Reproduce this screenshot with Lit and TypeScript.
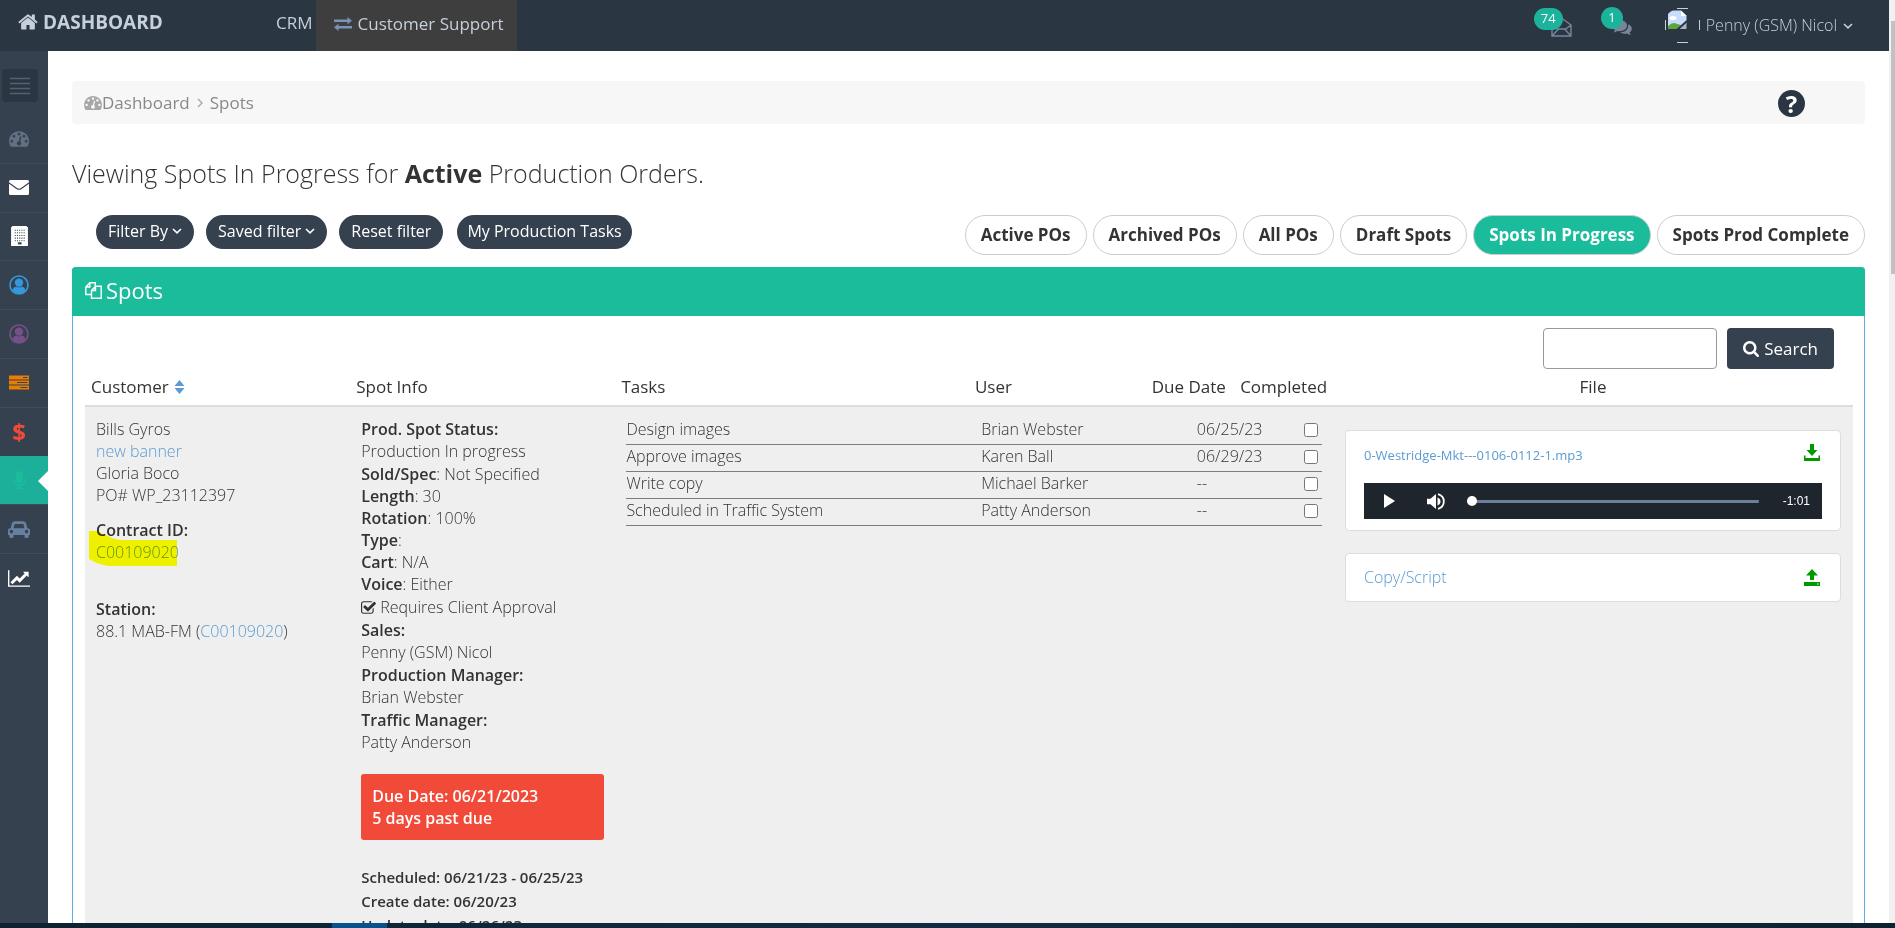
import { LitElement, html, css, svg, nothing, TemplateResult } from "lit";
import { customElement } from "lit/decorators.js";
import { classMap } from "lit/directives/class-map.js";

interface Glyph {
  box: string;
  w: number;
  h: number;
  body: TemplateResult;
}

const TACHOMETER =
  "M384 1152q0-53-37.5-90.5t-90.5-37.5-90.5 37.5-37.5 90.5 37.5 90.5 90.5 37.5 90.5-37.5 37.5-90.5zm192-448q0-53-37.5-90.5t-90.5-37.5-90.5 37.5-37.5 90.5 37.5 90.5 90.5 37.5 90.5-37.5 37.5-90.5zm428 481l101-382q6-26-7.5-48.5t-38.5-29.5-48 6.5-30 39.5l-101 382q-60 5-107 43.5t-63 98.5q-20 77 20 146t117 89 146-20 89-117q16-60-6-117t-72-91zm660-33q0-53-37.5-90.5t-90.5-37.5-90.5 37.5-37.5 90.5 37.5 90.5 90.5 37.5 90.5-37.5 37.5-90.5zm-640-640q0-53-37.5-90.5t-90.5-37.5-90.5 37.5-37.5 90.5 37.5 90.5 90.5 37.5 90.5-37.5 37.5-90.5zm448 192q0-53-37.5-90.5t-90.5-37.5-90.5 37.5-37.5 90.5 37.5 90.5 90.5 37.5 90.5-37.5 37.5-90.5zm320 448q0 261-141 483-19 29-54 29h-1402q-35 0-54-29-141-221-141-483 0-182 71-348t191-286 286-191 348-71 348 71 286 191 191 286 71 348z";

const person = svg`
  <circle cx="10" cy="10" r="9" fill="none" stroke="currentColor" stroke-width="1.6"/>
  <circle cx="10" cy="7.6" r="4.2" fill="currentColor"/>
  <path d="M3.6 15.2q.8-3.4 3.6-3.8 2.8 1.8 5.6 0 2.800.4 3.600 3.800-2.600 3.200-6.400 3.200t-6.400-3.200z" fill="currentColor"/>`;

const ICONS: Record<string, Glyph> = {
  home: {
    box: "64 224 1664 1344", w: 20, h: 16,
    body: svg`<path d="M1472 992v480q0 26-19 45t-45 19h-384v-384h-256v384h-384q-26 0-45-19t-19-45v-480q0-1 .5-3t.5-3l575-474 575 474q1 2 1 6zm223-69l-62 74q-8 9-21 11h-3q-13 0-21-7l-692-577-692 577q-12 8-24 7-13-2-21-11l-62-74q-8-10-7-23.500t11-21.500l719-599q32-26 76-26t76 26l244 204v-195q0-14 9-23t23-9h192q14 0 23 9t9 23v408l219 182q10 8 11 21.500t-7 23.500z"/>`,
  },
  exchange: {
    box: "0 0 18 14", w: 18, h: 14,
    body: svg`<path d="M0 2.500h13.500V0L18 3.800 13.500 7.300V5H0zM18 11.500H4.500V14L0 10.300 4.500 6.800V9H18z"/>`,
  },
  openMail: {
    box: "0 0 21 20", w: 21, h: 20,
    body: svg`<path d="M1 19V8l9.500-7L20 8v11zM1 19l6.500-7h6L20 19M1 8l6.500 5M20 8l-6.500 5" fill="none" stroke="currentColor" stroke-width="1.400"/>`,
  },
  chat: {
    box: "0 0 20 16", w: 20, h: 16,
    body: svg`<path d="M7.500 0C11.800 0 15 2.400 15 5.600s-3.200 5.600-7.500 5.600c-.8 0-1.500-.1-2.200-.3-1 .9-2.300 1.400-3.800 1.500.7-.7 1.200-1.400 1.400-2.500C1.100 8.900 0 7.400 0 5.600 0 2.400 3.200 0 7.500 0z"/><path d="M16.200 4.200c2.200.9 3.600 2.500 3.600 4.500 0 1.500-.8 2.800-2.200 3.800.2 1 .7 1.800 1.400 2.500-1.600-.1-2.900-.6-3.900-1.500-2.600.5-5.300 0-7-1.300 5 .2 8.700-3.200 8.100-8z"/>`,
  },
  chevron: {
    box: "0 0 10 6", w: 10, h: 6,
    body: svg`<path d="M1 1l4 3.800L9 1" fill="none" stroke="currentColor" stroke-width="1.600"/>`,
  },
  menu: {
    box: "0 0 20 18", w: 20, h: 18,
    body: svg`<path d="M0 1.500h20M0 6.500h20M0 11.500h20M0 16.500h20" fill="none" stroke="currentColor" stroke-width="1.600"/>`,
  },
  tachometer: { box: "0 256 1792 1408", w: 20, h: 16, body: svg`<path d=${TACHOMETER}/>` },
  tachometerSmall: { box: "0 256 1792 1408", w: 18, h: 14, body: svg`<path d=${TACHOMETER}/>` },
  mail: {
    box: "0 0 20 15", w: 20, h: 15,
    body: svg`<path d="M1.500 0h17Q20 0 20 1.500v.8L12 8q-2 1.400-4 0L0 2.300v-.8Q0 0 1.500 0z"/><path d="M0 3.700l7.400 5.200q2.600 1.700 5.200 0L20 3.700v9.800q0 1.500-1.500 1.500h-17Q0 15 0 13.500z"/>`,
  },
  building: {
    box: "0 0 16 19", w: 17, h: 20,
    body: svg`<path d="M1 0h14v1h1v18H0V1h1z"/><path d="M3.500 4h9.500M3.500 6.500h9.500M3.500 9h9.500M3.500 11.500h9.500M3.500 14h9.500" fill="none" stroke="#364150" stroke-width="1" stroke-dasharray="1 1.100"/><path d="M6.500 15.500h3.500v2H6.500z" fill="#364150"/>`,
  },
  person: { box: "0 0 20 20", w: 20, h: 20, body: person },
  tasks: {
    box: "0 0 20 14", w: 20, h: 15,
    body: svg`<path d="M0 0h20v4H0zM0 5h20v4H0zM0 10h20v4H0z"/><path d="M14 2h4.500M8 7h10.500M11.500 12h7" stroke="#364150" stroke-width="1"/>`,
  },
  mic: {
    box: "320 0 1152 1664", w: 13, h: 18,
    body: svg`<path d="M1472 704v128q0 221-147.500 384.500t-364.500 187.500v132h256q26 0 45 19t19 45-19 45-45 19h-640q-26 0-45-19t-19-45 19-45 45-19h256v-132q-217-24-364.500-187.500t-147.500-384.500v-128q0-26 19-45t45-19 45 19 19 45v128q0 185 131.500 316.500t316.500 131.500 316.500-131.500 131.500-316.500v-128q0-26 19-45t45-19 45 19 19 45zm-256-384v512q0 132-94 226t-226 94-226-94-94-226v-512q0-132 94-226t226-94 226 94 94 226z"/>`,
  },
  car: {
    box: "0 128 2048 1536", w: 22, h: 17,
    body: svg`<path d="M480 1088q0-66-47-113t-113-47-113 47-47 113 47 113 113 47 113-47 47-113zm36-320h1016l-89-357q-2-8-14-17.500t-21-9.500h-768q-9 0-21 9.500t-14 17.500zm1372 320q0-66-47-113t-113-47-113 47-47 113 47 113 113 47 113-47 47-113zm160-96v384q0 14-9 23t-23 9h-96v128q0 80-56 136t-136 56-136-56-56-136v-128h-1024v128q0 80-56 136t-136 56-136-56-56-136v-128h-96q-14 0-23-9t-9-23v-384q0-93 65.500-158.500t158.500-65.500h28l105-419q23-94 104-157.500t179-63.500h768q98 0 179 63.500t104 157.500l105 419h28q93 0 158.500 65.500t65.500 158.500z"/>`,
  },
  chart: {
    box: "0 128 2048 1536", w: 22, h: 17,
    body: svg`<path d="M2048 1536v128h-2048v-1536h128v1408h1920zm-128-1248v435q0 21-19.500 29.500t-35.500-7.500l-121-121-633 633q-10 10-23 10t-23-10l-233-233-416 416-192-192 585-585q10-10 23-10t23 10l233 233 464-464-121-121q-16-16-7.500-35.500t29.500-19.500h435q14 0 23 9t9 23z"/>`,
  },
  copy: {
    box: "0 0 17 17", w: 17, h: 17,
    body: svg`<path d="M6.500 12.500H.8V5L4.800.8h5.400V4M4.800.8V5H.8M6.500 16.200V8.500l4-4.300h5.700v12zM10.500 4.200v4.300h-4" fill="none" stroke="currentColor" stroke-width="1.400"/>`,
  },
  search: {
    box: "64 128 1664 1664", w: 16, h: 16,
    body: svg`<path d="M1216 832q0-185-131.500-316.500t-316.500-131.500-316.500 131.500-131.500 316.500 131.500 316.500 316.500 131.500 316.500-131.500 131.500-316.500zm512 832q0 52-38 90t-90 38q-54 0-90-38l-343-342q-179 124-399 124-143 0-273.500-55.500t-225-150-150-225-55.500-273.500 55.500-273.500 150-225 225-150 273.500-55.500 273.500 55.500 225 150 150 225 55.500 273.500q0 220-124 399l343 343q37 37 37 90z"/>`,
  },
  sort: {
    box: "0 0 10 14", w: 11, h: 14,
    body: svg`<path d="M5 0l5 6H0zM5 14L0 8h10z"/>`,
  },
  checked: {
    box: "64 128 1664 1408", w: 15, h: 13,
    body: svg`<path d="M1472 930v318q0 119-84.500 203.500t-203.500 84.500h-832q-119 0-203.500-84.500t-84.500-203.500v-832q0-119 84.500-203.500t203.500-84.500h832q63 0 117 25 15 7 18 23 3 17-9 29l-49 49q-10 10-23 10-3 0-9-2-23-6-45-6h-832q-66 0-113 47t-47 113v832q0 66 47 113t113 47h832q66 0 113-47t47-113v-254q0-13 9-22l64-64q10-10 23-10 6 0 12 3 20 8 20 29zm231-489l-814 814q-24 24-57 24t-57-24l-430-430q-24-24-24-57t24-57l110-110q24-24 57-24t57 24l263 263 647-647q24-24 57-24t57 24l110 110q24 24 24 57t-24 57z"/>`,
  },
  download: {
    box: "0 0 16 17", w: 16, h: 17,
    body: svg`<path d="M6 0h4v6h3.500L8 12 2.500 6H6zM0 11.500h1.500V14h13v-2.500H16V17H0z"/>`,
  },
  upload: {
    box: "0 0 16 17", w: 16, h: 17,
    body: svg`<path d="M8 0l6 6.500h-4V11H6V6.500H2zM0 13h16v4H0z"/><path d="M13 15h1.500" stroke="#fff" stroke-width="1"/>`,
  },
  play: { box: "0 0 11 14", w: 11, h: 14, body: svg`<path d="M0 0l11 7-11 7z"/>` },
  volume: {
    box: "0 0 18 17", w: 18, h: 17,
    body: svg`<path d="M0 5.700h3.500L9 1v15l-5.500-4.700H0zM10.500 4.500q3 1.200 3 4t-3 4z"/><path d="M11 1.200q5.800 1.600 5.800 7.300T11 15.800" fill="none" stroke="currentColor" stroke-width="1.800"/>`,
  },
};

const icon = (name: string) => {
  const g = ICONS[name];
  return html`<svg class="icon" viewBox=${g.box} width=${g.w} height=${g.h} aria-hidden="true">${g.body}</svg>`;
};

const NAV: { glyph: string; tone: string; label: string }[] = [
  { glyph: "tachometer", tone: "dim", label: "Dashboard" },
  { glyph: "mail", tone: "white", label: "Messages" },
  { glyph: "building", tone: "white", label: "Companies" },
  { glyph: "person", tone: "blue", label: "Contacts" },
  { glyph: "person", tone: "purple", label: "Leads" },
  { glyph: "tasks", tone: "orange", label: "Tasks" },
  { glyph: "", tone: "red", label: "Billing" },
  { glyph: "mic", tone: "active", label: "Production" },
  { glyph: "car", tone: "steel", label: "Traffic" },
  { glyph: "chart", tone: "white", label: "Reports" },
];

const TABS = ["Active POs", "Archived POs", "All POs", "Draft Spots", "Spots In Progress", "Spots Prod Complete"];

const TASKS = [
  ["Design images", "Brian Webster", "06/25/23"],
  ["Approve images", "Karen Ball", "06/29/23"],
  ["Write copy", "Michael Barker", "--"],
  ["Scheduled in Traffic System", "Patty Anderson", "--"],
];

const SPECS = [
  ["Sold/Spec", " Not Specified"],
  ["Length", " 30"],
  ["Rotation", " 100%"],
  ["Type", ""],
  ["Cart", " N/A"],
  ["Voice", " Either"],
];

const PEOPLE = [
  ["Sales:", "Penny (GSM) Nicol"],
  ["Production Manager:", "Brian Webster"],
  ["Traffic Manager:", "Patty Anderson"],
];

const shared = css`
  * { box-sizing: border-box; }
  a { color: #5b9bd1; text-decoration: none; }
  button, input { font: inherit; margin: 0; }
  button { cursor: pointer; }
  .icon { display: block; flex: none; fill: currentColor; }
`;

@customElement("top-bar")
export class TopBar extends LitElement {
  static styles = [shared, css`
    :host { display: flex; height: 51px; background: #2b3643; color: #c6cfda; font-size: 17px; line-height: 24px; }
    a { color: inherit; }
    .brand { display: flex; align-items: center; gap: 5px; width: 276px; padding: 0 0 8px 18px; font-size: 19px; font-weight: 700; }
    .crm { display: flex; align-items: center; padding: 0 3px 6px 0; }
    .support { display: flex; align-items: center; gap: 6px; padding: 0 14px 4px 18px; background: #3e3e3e; }
    .support .icon { color: #7a93b8; }
    .right { display: flex; align-items: center; margin-left: auto; padding-right: 36px; }
    .note { position: relative; display: block; color: #79869a; }
    .mail { margin: 3px 40px 0 0; }
    .talk { margin: 5px 33px 0 0; }
    .badge { position: absolute; right: 9px; bottom: 7px; height: 22px; padding: 0 7px; border-radius: 11px; background: #1bb39c; color: #fff; font-size: 13px; line-height: 21px; }
    .user { display: flex; align-items: center; gap: 6px; padding: 0; border: 0; background: none; color: #c6cfda; font-size: 16px; font-weight: 300; }
    .avatar { display: block; }
    .name { padding-bottom: 1px; }
  `];

  render() {
    return html`
      <a class="brand" href="#">${icon("home")}<span>DASHBOARD</span></a>
      <a class="crm" href="#">CRM</a>
      <a class="support" href="#">${icon("exchange")}<span>Customer Support</span></a>
      <div class="right">
        <a class="note mail" href="#" aria-label="Messages">${icon("openMail")}<span class="badge">74</span></a>
        <a class="note talk" href="#" aria-label="Chats">${icon("chat")}<span class="badge">1</span></a>
        <button class="user">
          <svg class="avatar" width="35" height="35" viewBox="0 0 35 35" aria-hidden="true">
            <path d="M.5 12v10M34.500 12v10M12 .5h11M12 34.500h11" stroke="#c6cfda" fill="none"/>
            <path d="M3 20V6q2-3 5-3.500h8l5.500 5V15l-7.500 6H3z" fill="#c9dcfb"/>
            <path d="M3 21v-3q5-5 9-2l4 1-3 4z" fill="#5aa83c"/>
            <path d="M14 21l7.500-7v7z" fill="#a9b4c4"/>
            <path d="M16 2.500v5.500h5.500z" fill="#fff"/>
            <path d="M12 22L22 13" stroke="#2b3643" stroke-width="2"/>
            <ellipse cx="8" cy="10" rx="3.500" ry="2" fill="#fff"/>
          </svg>
          <span class="name">Penny (GSM) Nicol</span>${icon("chevron")}
        </button>
      </div>`;
  }
}

@customElement("side-bar")
export class SideBar extends LitElement {
  static styles = [shared, css`
    :host { display: block; flex: none; width: 48px; padding-top: 18px; background: #364150; }
    .toggle { display: flex; align-items: center; justify-content: center; width: 36px; height: 33px; margin: 0 0 12px 2px; padding: 0; border: 0; border-radius: 4px; background: #2b3643; color: #56616f; }
    ul { display: flex; flex-direction: column; height: 488px; margin: 0; padding: 0; list-style: none; }
    li { flex: 1; border-top: 1px solid #414d5d; }
    li:first-child { border-color: transparent; }
    a { display: flex; align-items: center; justify-content: center; height: 100%; padding-right: 10px; font-size: 24px; font-weight: 700; line-height: 24px; }
    .dim { color: #637083; }
    .white { color: #fff; }
    .blue { color: #3598dc; }
    .purple { color: #75508a; }
    .orange { color: #e87e04; }
    .red { color: #f24a38; }
    .steel { color: #67809f; }
    li.on { border-color: #1caf9a; background: #1caf9a; }
    .active { position: relative; color: #1bbc9b; }
    .active::after { content: ""; position: absolute; right: 0; top: 14px; border: 10px solid transparent; border-left: 0; border-right-color: #fff; }
  `];

  render() {
    return html`
      <button class="toggle" aria-label="Toggle menu">${icon("menu")}</button>
      <ul>
        ${NAV.map((n) => html`<li class=${classMap({ on: n.tone === "active" })}>
          <a class=${n.tone} href="#" aria-label=${n.label}>${n.glyph ? icon(n.glyph) : "$"}</a>
        </li>`)}
      </ul>`;
  }
}

@customElement("audio-player")
export class AudioPlayer extends LitElement {
  static styles = [shared, css`
    :host { display: flex; align-items: center; height: 36px; padding: 0 12px 0 20px; background: #1e252d; color: #fff; }
    button { padding: 0; border: 0; background: none; color: inherit; }
    .sound { margin: 0 22px 0 32px; }
    input { flex: 1; min-width: 0; height: 10px; appearance: none; background: linear-gradient(#6e7f9c, #6e7f9c) center / 100% 3px no-repeat; }
    input::-webkit-slider-thumb { appearance: none; width: 10px; height: 10px; border-radius: 50%; background: #fff; }
    .time { padding-left: 24px; font: 12px/16px "Liberation Sans", Arial, sans-serif; }
  `];

  render() {
    return html`
      <button class="play" aria-label="Play">${icon("play")}</button>
      <button class="sound" aria-label="Mute">${icon("volume")}</button>
      <input type="range" min="0" max="61" value="0" aria-label="Position" />
      <span class="time">-1:01</span>`;
  }
}

@customElement("spot-table")
export class SpotTable extends LitElement {
  static styles = [shared, css`
    :host { display: block; }
    table { width: 100%; border-collapse: separate; border-spacing: 0; table-layout: fixed; }
    .quarter { width: 15%; }
    .wide { width: 20%; }
    .tenth { width: 10%; }
    .slim { width: 5%; }
    .file { width: 520px; }
    .outer th { height: 38px; padding: 0 0 0 6px; border-bottom: 2px solid #ddd; font-size: 17px; line-height: 24px; font-weight: 500; text-align: left; white-space: nowrap; }
    .outer th.center { padding: 0; text-align: center; }
    .sort { display: inline-flex; align-items: center; gap: 5px; padding: 0; border: 0; background: none; color: inherit; }
    .sort .icon { color: #5b9bd1; }
    .cell { padding: 11px; vertical-align: top; background: #efefef; height: 540px; }
    .cell.cards { padding: 23px 12px 0; }
    b { font-weight: 600; }
    .contract { position: relative; margin: 13px 0 35px; }
    .marker { position: absolute; left: -7px; top: 12px; mix-blend-mode: multiply; pointer-events: none; }
    .info { display: grid; gap: 1px; }
    .approval { display: flex; align-items: center; gap: 4px; }
    .due { margin: 21px 0 25px; padding: 11px; border-radius: 3px; background: #f24a38; color: #fff; font-weight: 600; }
    .dates { font-size: 15px; line-height: 24px; font-weight: 600; }
    .tasks col.task { width: 51%; }
    .tasks col.who { width: 31%; }
    .tasks td { height: 27px; padding: 0 0 4px; border-bottom: 1px solid #7d7d7d; vertical-align: top; }
    .tasks td.tick { padding: 5px 4px 0 0; text-align: right; line-height: 0; }
    .tick input { width: 14px; height: 14px; }
    .card { margin-bottom: 22px; padding: 0 18px; border: 1px solid #ddd; border-radius: 4px; background: #fff; }
    .audio { padding-bottom: 11px; }
    .line { display: flex; align-items: center; justify-content: space-between; height: 47px; padding-bottom: 1px; }
    .audio .line { height: 52px; padding-bottom: 4px; font-size: 13px; font-weight: 400; }
    .act { padding: 0 2px; border: 0; background: none; color: #090; }
    .audio .act { padding-bottom: 6px; }
  `];

  render() {
    return html`
      <table class="outer">
        <colgroup>
          <col class="quarter" /><col class="quarter" /><col class="wide" /><col class="tenth" /><col class="slim" /><col /><col class="file" />
        </colgroup>
        <thead>
          <tr>
            <th><button class="sort">Customer ${icon("sort")}</button></th>
            <th>Spot Info</th><th>Tasks</th><th>User</th><th>Due Date</th><th>Completed</th>
            <th class="center">File</th>
          </tr>
        </thead>
        <tbody>
          <tr>
            <td class="cell">
              <div>Bills Gyros</div>
              <div><a href="#">new banner</a></div>
              <div>Gloria Boco</div>
              <div>PO# WP_23112397</div>
              <div class="contract">
                <div><b>Contract ID:</b></div>
                <div><a href="#">C00109020</a></div>
                <svg class="marker" width="88" height="35" viewBox="0 0 88 35" aria-hidden="true">
                  <path d="M0 0h8l9 4q8 5 17 5h54v26H19Q8 33 0 28z" fill="#ff0"/>
                </svg>
              </div>
              <div><b>Station:</b></div>
              <div>88.1 MAB-FM (<a href="#">C00109020</a>)</div>
            </td>
            <td class="cell">
              <div class="info">
                <div><b>Prod. Spot Status:</b><br />Production In progress</div>
                <div>${SPECS.map(([k, v]) => html`<div><b>${k}</b>:${v}</div>`)}</div>
                <div class="approval">${icon("checked")}<span>Requires Client Approval</span></div>
                ${PEOPLE.map(([k, v]) => html`<div><b>${k}</b><br />${v}</div>`)}
              </div>
              <div class="due">Due Date: 06/21/2023<br />5 days past due</div>
              <div class="dates">
                <div>Scheduled: 06/21/23 - 06/25/23</div>
                <div>Create date: 06/20/23</div>
                <div>Update date: 06/26/23</div>
              </div>
            </td>
            <td class="cell" colspan="4">
              <table class="tasks">
                <colgroup><col class="task" /><col class="who" /><col /><col /></colgroup>
                ${TASKS.map(([task, who, due]) => html`<tr>
                  <td>${task}</td><td>${who}</td><td>${due}</td>
                  <td class="tick"><input type="checkbox" aria-label="${task} completed" /></td>
                </tr>`)}
              </table>
            </td>
            <td class="cell cards">
              <div class="card audio">
                <div class="line">
                  <a href="#">0-Westridge-Mkt---0106-0112-1.mp3</a>
                  <button class="act" aria-label="Download">${icon("download")}</button>
                </div>
                <audio-player></audio-player>
              </div>
              <div class="card">
                <div class="line">
                  <a href="#">Copy/Script</a>
                  <button class="act" aria-label="Upload">${icon("upload")}</button>
                </div>
              </div>
            </td>
          </tr>
        </tbody>
      </table>`;
  }
}

@customElement("app-root")
export class AppRoot extends LitElement {
  static styles = [shared, css`
    :host { display: flex; flex-direction: column; height: 100vh; overflow: hidden; background: #fff; color: #333; font: 300 16px/22px "Open Sans", sans-serif; }
    .window { display: flex; flex: 1; min-height: 0; }
    .page { display: flex; flex-direction: column; flex: 1; min-width: 0; overflow: hidden; }
    .body { display: flex; flex: 1; min-height: 0; }
    top-bar { flex: none; font-weight: 400; }
    main { flex: 1; min-width: 0; padding: 30px 24px 0; overflow: hidden; }
    .crumbs { display: flex; align-items: center; gap: 7px; height: 43px; padding: 0 60px 0 12px; border-radius: 4px; background: #f7f7f7; color: #888; font-size: 17px; font-weight: 400; }
    .crumbs a { display: flex; align-items: center; color: #888; }
    .crumbs .icon { color: #a7a7a7; }
    .help { width: 27px; height: 27px; margin: 2px 0 0 auto; padding: 0; border: 0; border-radius: 50%; background: #2b3643; color: #fff; font-size: 24px; font-weight: 700; line-height: 27px; }
    h1 { margin: 32px 0 25px; font-size: 25px; line-height: 34px; font-weight: 300; }
    h1 b { font-weight: 700; }
    .tools { display: flex; justify-content: space-between; align-items: flex-start; margin-bottom: 12px; }
    .filters { display: flex; gap: 12px; padding-left: 24px; font-weight: 400; }
    .pill { display: flex; align-items: center; gap: 4px; height: 34px; padding: 0 12px 2px; border: 0; border-radius: 17px; background: #364150; color: #fff; }
    .mine { margin-left: 2px; padding: 0 10px 2px; }
    .tabs { display: flex; gap: 6px; font-size: 17px; font-weight: 700; }
    .tab { height: 40px; padding: 0 15px; border: 1px solid #ccc; border-radius: 20px; background: #fff; color: #333; }
    .tab.on { background: #1bbc9b; color: #fff; }
    .panel { border: 1px solid #60aee4; border-top: 0; border-radius: 4px 4px 0 0; }
    h2 { display: flex; align-items: center; gap: 4px; height: 49px; margin: 0 -1px; padding: 0 13px 3px; border-radius: 4px 4px 0 0; background: #1bbc9b; color: #fff; font-size: 22px; line-height: 30px; font-weight: 400; }
    .content { padding: 12px 11px 0 12px; }
    .search { display: flex; justify-content: flex-end; gap: 10px; padding-right: 19px; font-size: 17px; font-weight: 400; }
    .search input { width: 174px; height: 41px; padding: 0 12px; border: 1px solid #999; border-radius: 4px; background: #fff; }
    .search button { display: flex; align-items: center; gap: 5px; height: 41px; padding: 0 16px; border: 0; border-radius: 4px; background: #364150; color: #fff; }
    .rail { flex: none; width: 6px; padding: 21px 0 0 2px; background: #f1f1f1; }
    .thumb { height: 28%; background: #c1c1c1; }
    .dock { flex: none; height: 5px; padding-left: 332px; background: linear-gradient(90deg, #0b2230, #0f2c44, #0b2230); }
    .running { width: 55px; height: 5px; background: #05528f; }
  `];

  private chevron(label: string) {
    return label === "Filter By" || label === "Saved filter" ? icon("chevron") : nothing;
  }

  render() {
    return html`
      <div class="window">
        <div class="page">
          <top-bar></top-bar>
          <div class="body">
            <side-bar></side-bar>
            <main>
              <nav class="crumbs">
                <a href="#">${icon("tachometerSmall")}Dashboard</a>
                <svg width="6" height="10" viewBox="0 0 6 10" aria-hidden="true"><path d="M1 1l4 4-4 4" fill="none" stroke="#a7a7a7" stroke-width="1.400"/></svg>
                <a href="#">Spots</a>
                <button class="help" aria-label="Help">?</button>
              </nav>
              <h1>Viewing Spots In Progress for <b>Active</b> Production Orders.</h1>
              <div class="tools">
                <div class="filters">
                  ${["Filter By", "Saved filter", "Reset filter"].map((f) => html`<button class="pill">${f}${this.chevron(f)}</button>`)}
                  <button class="pill mine">My Production Tasks</button>
                </div>
                <div class="tabs">
                  ${TABS.map((t) => html`<button class=${classMap({ tab: true, on: t === "Spots In Progress" })}>${t}</button>`)}
                </div>
              </div>
              <section class="panel">
                <h2>${icon("copy")}Spots</h2>
                <div class="content">
                  <form class="search" @submit=${(e: Event) => e.preventDefault()}>
                    <input type="text" aria-label="Search spots" />
                    <button>${icon("search")}Search</button>
                  </form>
                  <spot-table></spot-table>
                </div>
              </section>
            </main>
          </div>
        </div>
        <div class="rail"><div class="thumb"></div></div>
      </div>
      <div class="dock"><div class="running"></div></div>`;
  }
}
